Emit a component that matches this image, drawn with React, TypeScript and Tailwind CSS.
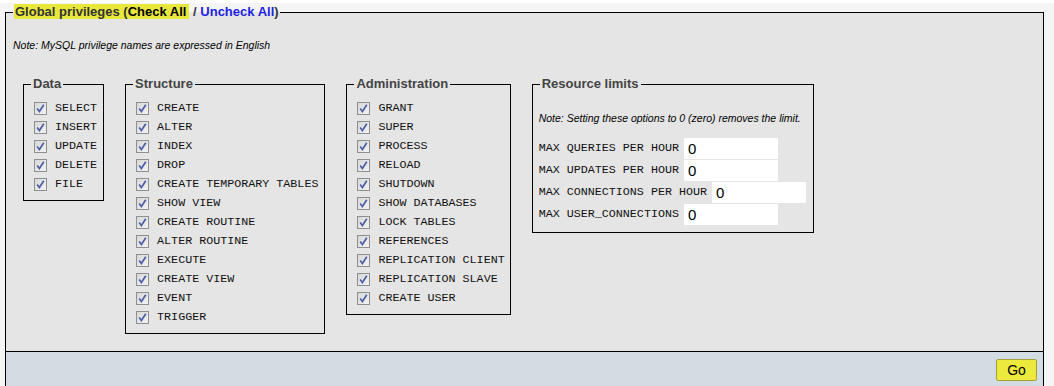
import React from "react";

const dataPrivs = ["SELECT", "INSERT", "UPDATE", "DELETE", "FILE"];
const structurePrivs = [
  "CREATE",
  "ALTER",
  "INDEX",
  "DROP",
  "CREATE TEMPORARY TABLES",
  "SHOW VIEW",
  "CREATE ROUTINE",
  "ALTER ROUTINE",
  "EXECUTE",
  "CREATE VIEW",
  "EVENT",
  "TRIGGER",
];
const adminPrivs = [
  "GRANT",
  "SUPER",
  "PROCESS",
  "RELOAD",
  "SHUTDOWN",
  "SHOW DATABASES",
  "LOCK TABLES",
  "REFERENCES",
  "REPLICATION CLIENT",
  "REPLICATION SLAVE",
  "CREATE USER",
];
const limits = [
  "MAX QUERIES PER HOUR",
  "MAX UPDATES PER HOUR",
  "MAX CONNECTIONS PER HOUR",
  "MAX USER_CONNECTIONS",
];

const CheckBox = () => (
  <svg width="13" height="13" viewBox="0 0 13 13" className="shrink-0">
    <defs>
      <linearGradient id="cbg" x1="0" y1="0" x2="1" y2="1">
        <stop offset="0" stopColor="#d6d6d6" />
        <stop offset="1" stopColor="#f4f4f4" />
      </linearGradient>
    </defs>
    <rect x="0.5" y="0.5" width="12" height="12" fill="url(#cbg)" stroke="#8e8f8f" />
    <path d="M3.2 6.4 L5.4 9.4 L9.8 2.8" fill="none" stroke="#4b5ea6" strokeWidth="1.7" />
  </svg>
);

const PrivGroup = ({ title, items, className }: { title: string; items: string[]; className: string }) => (
  <fieldset className={className}>
    <legend className="px-[2px] text-[13px] leading-[16px] font-bold text-[#444]">{title}</legend>
    <div className="pt-[7px]">
      {items.map((item) => (
        <label key={item} className="flex h-[19px] items-center gap-[8px] pl-[3px]">
          <CheckBox />
          <span className="font-['Liberation_Mono',monospace] text-[11.7px] text-[#111] whitespace-pre">
            {item}
          </span>
        </label>
      ))}
    </div>
  </fieldset>
);

export default function App() {
  return (
    <div className="min-h-screen bg-[#f5f5f5] pl-[5px] pr-[10px] font-['Liberation_Sans',Arial,sans-serif]">
      <fieldset className="mt-[3px] border border-black bg-[#e5e5e5] px-[7px] pb-[17px]">
        <legend className="px-[1px] text-[13px] leading-[18px] font-bold">
          <span className="bg-[#e8e83c] px-[1px] pr-[3px] text-[#333]">
            Global privileges (<span className="text-black">Check All</span>
          </span>
          <span className="text-[#334]"> / </span>
          <span className="text-[#1d1de6]">Uncheck All</span>
          <span className="text-[#333]">)</span>
        </legend>

        <p className="mt-[18px] text-[10.5px] italic leading-[12px] text-black">
          Note: MySQL privilege names are expressed in English
        </p>

        <div className="mt-[25px] ml-[10px] flex items-start gap-[21px]">
          <PrivGroup title="Data" items={dataPrivs} className="border border-black pl-[7px] pr-[6px] pb-[6px]" />
          <PrivGroup title="Structure" items={structurePrivs} className="border border-black pl-[7px] pr-[6px] pb-[6px]" />
          <PrivGroup title="Administration" items={adminPrivs} className="border border-black pl-[7px] pr-[5px] pb-[6px]" />

          <fieldset className="border border-black pl-[6px] pr-[7px] pb-[7px]">
            <legend className="ml-[1px] px-[2px] text-[13px] leading-[16px] font-bold text-[#444]">
              Resource limits
            </legend>
            <p className="pt-[20px] text-[10.5px] italic leading-[12px] text-black">
              Note: Setting these options to 0 (zero) removes the limit.
            </p>
            <div className="mt-[14px] flex flex-col gap-[1px]">
              {limits.map((l) => (
                <div key={l} className="flex items-center gap-[5px]">
                  <span className="font-['Liberation_Mono',monospace] text-[11.7px] text-[#111] whitespace-pre">
                    {l}
                  </span>
                  <input
                    readOnly
                    value="0"
                    className="h-[21px] w-[94px] bg-white pl-[4px] pt-[2px] text-[15px] text-black outline-none"
                  />
                </div>
              ))}
            </div>
          </fieldset>
        </div>
      </fieldset>

      <div className="flex h-[40px] justify-end border-x border-black bg-[#d4dce3] pt-[7px] pr-[6px]">
        <button className="h-[22px] w-[41px] rounded-[2px] border border-[#a3a23a] bg-[#ecea3c] text-[14px] leading-[20px] text-black">
          Go
        </button>
      </div>
    </div>
  );
}
